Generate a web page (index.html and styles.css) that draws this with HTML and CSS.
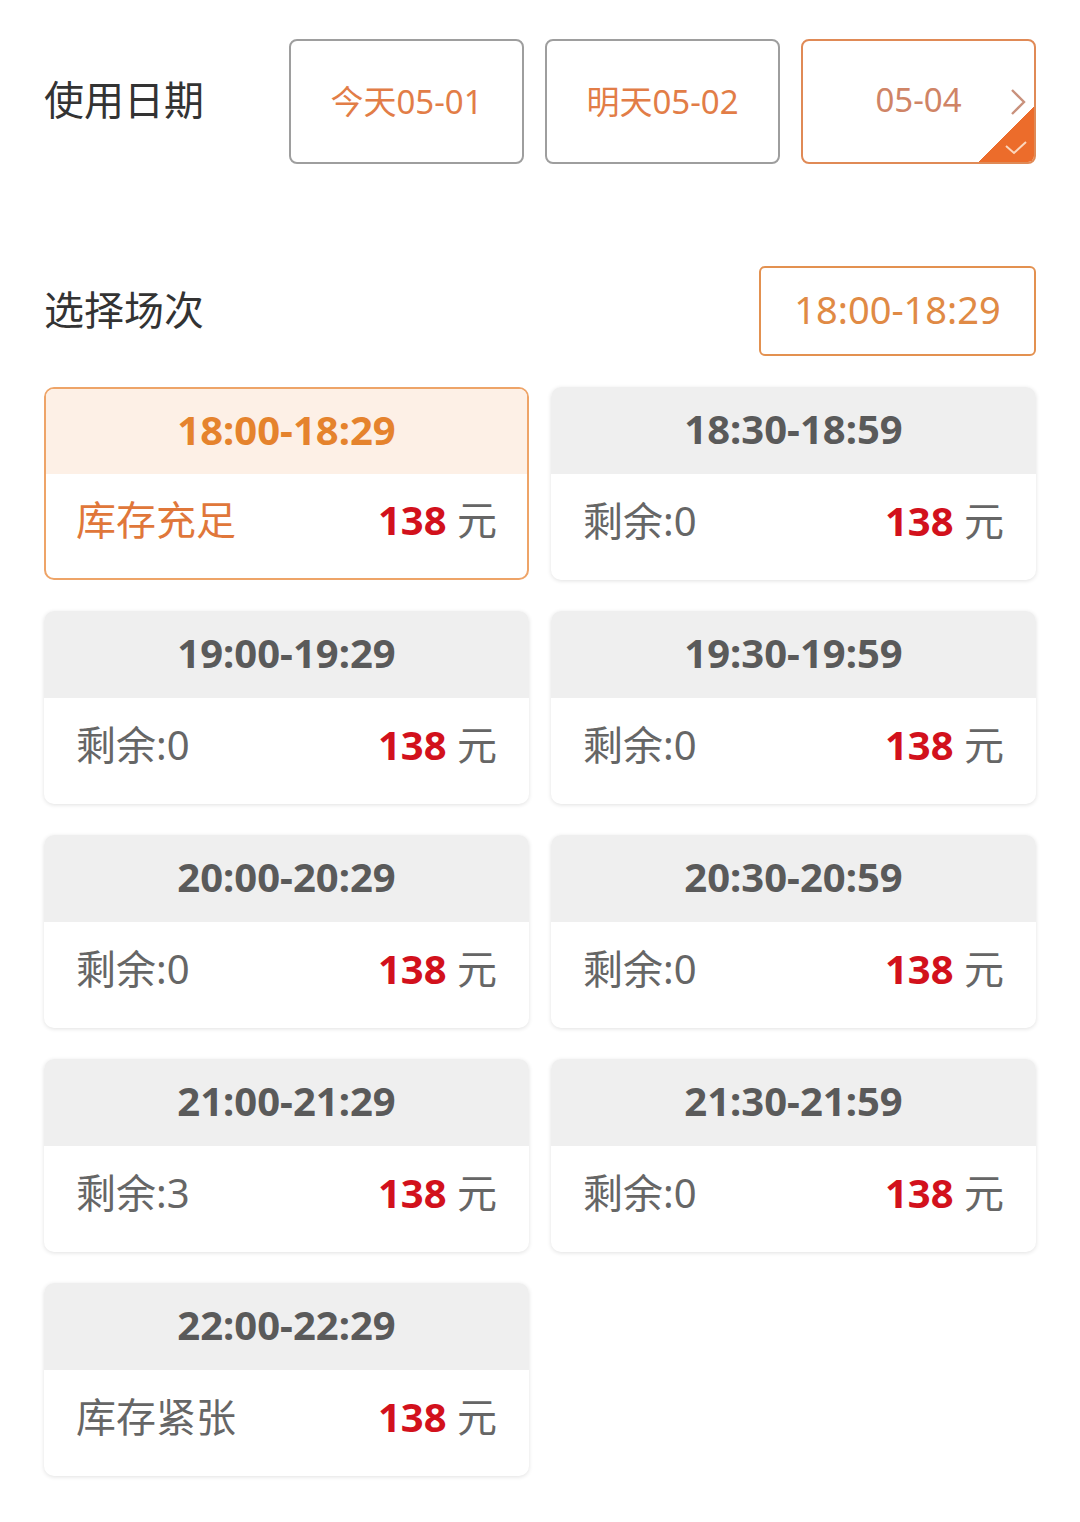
FILE: index.html
```html
<!DOCTYPE html>
<html lang="zh-CN">

<head>
    <meta charset="UTF-8">
    <title>选择场次</title>
    <link rel="stylesheet" href="styles.css">
</head>

<body>
    <div class="page">
        <div class="date-row">
            <div class="label">使用日期</div>
            <button class="date-btn">今天05-01</button>
            <button class="date-btn">明天05-02</button>
            <button class="date-btn active">
                05-04
                <span class="arrow">
                    <svg width="16" height="28" viewBox="0 0 16 28"><path d="M2 2 L14 14 L2 26" fill="none" stroke="currentColor" stroke-width="2.4"/></svg>
                </span>
                <span class="corner">
                    <svg width="24" height="16" viewBox="0 0 24 16"><path d="M2 6 L10 13 L22 2" fill="none" stroke="#fbd6bd" stroke-width="2"/></svg>
                </span>
            </button>
        </div>

        <div class="session-row">
            <div class="label">选择场次</div>
            <div class="picked">18:00-18:29</div>
        </div>

        <div class="slots">
            <div class="slot selected">
                <div class="slot-time">18:00-18:29</div>
                <div class="slot-body"><span class="stock">库存充足</span><span class="price"><b>138</b> 元</span></div>
            </div>
            <div class="slot">
                <div class="slot-time">18:30-18:59</div>
                <div class="slot-body"><span class="stock">剩余:0</span><span class="price"><b>138</b> 元</span></div>
            </div>
            <div class="slot">
                <div class="slot-time">19:00-19:29</div>
                <div class="slot-body"><span class="stock">剩余:0</span><span class="price"><b>138</b> 元</span></div>
            </div>
            <div class="slot">
                <div class="slot-time">19:30-19:59</div>
                <div class="slot-body"><span class="stock">剩余:0</span><span class="price"><b>138</b> 元</span></div>
            </div>
            <div class="slot">
                <div class="slot-time">20:00-20:29</div>
                <div class="slot-body"><span class="stock">剩余:0</span><span class="price"><b>138</b> 元</span></div>
            </div>
            <div class="slot">
                <div class="slot-time">20:30-20:59</div>
                <div class="slot-body"><span class="stock">剩余:0</span><span class="price"><b>138</b> 元</span></div>
            </div>
            <div class="slot">
                <div class="slot-time">21:00-21:29</div>
                <div class="slot-body"><span class="stock">剩余:3</span><span class="price"><b>138</b> 元</span></div>
            </div>
            <div class="slot">
                <div class="slot-time">21:30-21:59</div>
                <div class="slot-body"><span class="stock">剩余:0</span><span class="price"><b>138</b> 元</span></div>
            </div>
            <div class="slot">
                <div class="slot-time">22:00-22:29</div>
                <div class="slot-body"><span class="stock">库存紧张</span><span class="price"><b>138</b> 元</span></div>
            </div>
        </div>
    </div>
</body>

</html>
```

FILE: styles.css
```css
body {
    margin: 0;
    background-color: #fff;
    font-family: "Noto Sans", "Noto Sans CJK SC", sans-serif;
    color: #333;
}

.page {
    padding: 39px 44px 40px 44px;
}

.label {
    font-size: 40px;
    color: #333;
    padding-bottom: 7px;
}

.date-row {
    display: grid;
    grid-template-columns: 224px 235px 235px 235px;
    column-gap: 21px;
    align-items: center;
}

.date-btn {
    position: relative;
    height: 125px;
    border: 2px solid #9e9e9e;
    border-radius: 8px;
    background-color: #fff;
    color: #e27d47;
    font-family: "Noto Sans", "Noto Sans CJK SC", sans-serif;
    font-size: 33px;
    overflow: hidden;
    padding: 0 0 4px 0;
}

.date-btn.active {
    border-color: #e08a56;
    color: #cf8466;
}

.arrow {
    position: absolute;
    right: 8px;
    top: 40px;
    color: #c9917c;
}

.corner {
    position: absolute;
    right: 0;
    bottom: 0;
    width: 56px;
    height: 56px;
    background: linear-gradient(to top left, #ec6c2b 50%, transparent 50%);
}

.corner svg {
    position: absolute;
    right: 6px;
    bottom: 6px;
}

.session-row {
    display: flex;
    justify-content: space-between;
    align-items: center;
    margin-top: 102px;
}

.picked {
    width: 277px;
    height: 90px;
    border: 2px solid #e39150;
    border-radius: 6px;
    display: flex;
    justify-content: center;
    align-items: center;
    font-size: 38px;
    color: #e08a45;
    padding-bottom: 4px;
    box-sizing: border-box;
}

.slots {
    display: grid;
    grid-template-columns: 485px 485px;
    column-gap: 22px;
    row-gap: 31px;
    margin-top: 31px;
}

.slot {
    height: 193px;
    border-radius: 10px;
    background-color: #fff;
    box-shadow: 0 1px 4px rgba(0, 0, 0, 0.12);
    overflow: hidden;
    box-sizing: border-box;
}

.slot-time {
    height: 87px;
    background-color: #efefef;
    display: flex;
    justify-content: center;
    align-items: center;
    font-size: 40px;
    font-weight: bold;
    color: #5a5a5a;
    padding-bottom: 4px;
    box-sizing: border-box;
}

.slot-body {
    height: 106px;
    display: flex;
    justify-content: space-between;
    align-items: center;
    padding: 0 32px 16px 32px;
    box-sizing: border-box;
    font-size: 40px;
    color: #666;
}

.price {
    color: #666;
}

.price b {
    color: #d2111c;
}

.slot.selected {
    border: 2px solid #eea468;
    box-shadow: none;
}

.slot.selected .slot-time {
    height: 85px;
    background-color: #fdf0e6;
    color: #e5832d;
}

.slot.selected .slot-body {
    height: 104px;
    padding-left: 30px;
    padding-right: 30px;
}

.slot.selected .stock {
    color: #e0773a;
}
```
